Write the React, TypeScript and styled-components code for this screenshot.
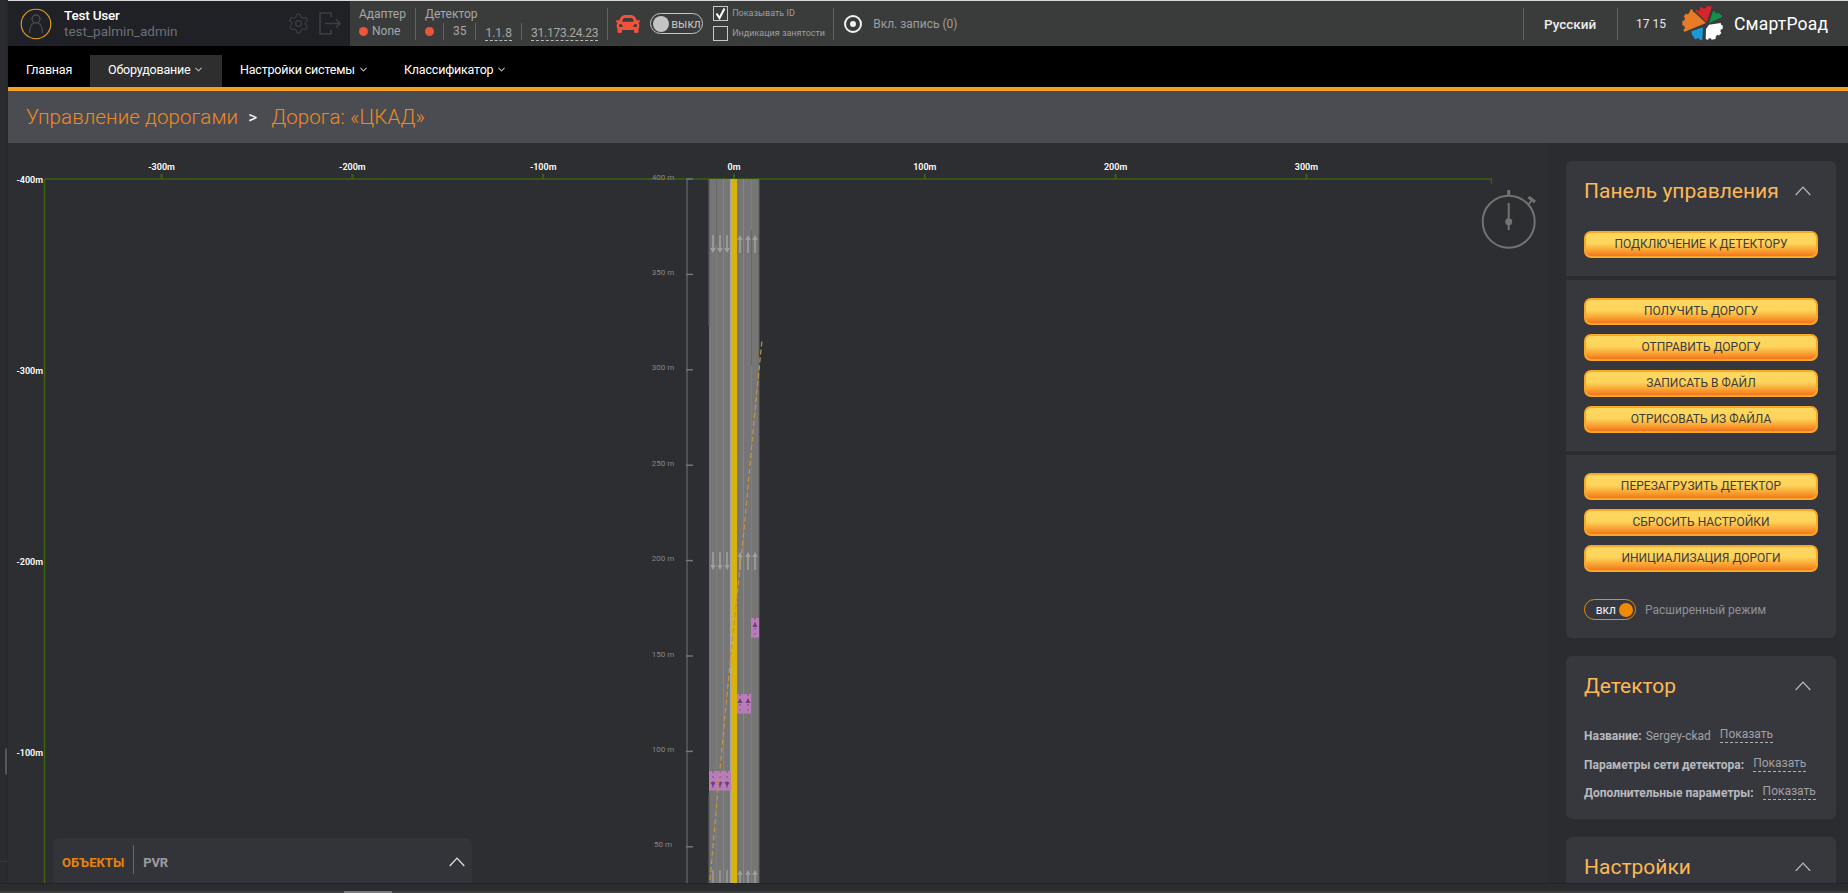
import React from "react";
import styled, { createGlobalStyle } from "styled-components";
import { FaCar } from "react-icons/fa";
import { ChevronDown, Settings } from "lucide-react";

const Global = createGlobalStyle`
  html, body { margin: 0; padding: 0; background: #2a2b2f; overflow: hidden; }
  * { box-sizing: border-box; }
  body { font-family: Roboto, "Liberation Sans", sans-serif; }
`;

const Page = styled.div`
  width: 1848px; height: 893px; display: flex; flex-direction: column; overflow: hidden; background: #2a2b2f;
`;
const Workspace = styled.div`
  height: 883px; display: flex; position: relative;
`;
const LeftRail = styled.div`
  width: 8px; flex: none; background: #2a2b2f; position: relative; border-right: 1px solid #27282c;
`;
const RailHandle = styled.div`
  position: absolute; left: 5px; top: 748px; width: 2px; height: 27px; background: #55575b; border-radius: 2px 0 0 2px;
`;
const RailLine = styled.div`
  position: absolute; left: 0; right: 0; top: 861px; height: 1px; background: #3a3b3f;
`;
const Main = styled.div`
  flex: 1; min-width: 0; display: flex; flex-direction: column;
`;
const TopBar = styled.header`
  height: 46px; flex: none; display: flex; border-top: 1px solid #d8d8d8;
`;
const UserBlock = styled.div`
  width: 342px; flex: none; background: #1f2126; display: flex; align-items: center; padding: 0 9px 0 12px;
`;
const UserText = styled.div`
  margin-left: 12px; flex: 1;
`;
const UserName = styled.div`
  font-size: 13.5px; line-height: 15px; font-weight: 500; color: #fff; letter-spacing: -0.2px;
`;
const UserLogin = styled.div`
  font-size: 13.5px; line-height: 16px; color: #6b7076;
`;
const DimIcons = styled.div`
  display: flex; align-items: center; gap: 9px; color: #3d3f43;
`;
const StatusBar = styled.div`
  flex: 1; background: #3a3c3b; display: flex; align-items: center; color: #a6a8a8; padding-left: 9px;
`;
const StatusCol = styled.div`
  display: flex; flex-direction: column; height: 33px; justify-content: space-between;
`;
const StatusLabel = styled.div`
  font-size: 12px; line-height: 15px; color: #a6a8a8; white-space: nowrap;
`;
const StatusValues = styled.div`
  display: flex; align-items: center; font-size: 12px; line-height: 17px; height: 17px; white-space: nowrap;
`;
const Dot = styled.span<{ $gap: number }>`
  width: 9px; height: 9px; border-radius: 50%; background: #eb553a; margin-right: ${(p) => p.$gap}px; flex: none;
`;
const VDivider = styled.div<{ $mx: number; $h?: number }>`
  width: 1px; height: ${(p) => p.$h ?? 32}px; background: #606262; margin: 0 ${(p) => p.$mx}px; flex: none;
`;
const Dashed = styled.span<{ $tight?: boolean }>`
  border-bottom: 1px dashed #b8b8b8; color: #a6a8a8; line-height: 14px; margin-top: 3px;
  letter-spacing: ${(p) => (p.$tight ? "-0.25px" : "0")};
`;
const CarWrap = styled.div`
  display: flex; margin: 0 10px 0 -1px; color: #f0533a;
`;
const OffToggle = styled.div`
  width: 53px; height: 21px; border: 1px solid #c4c4c4; border-radius: 11px; display: flex; align-items: center; padding-left: 2px; margin-right: 10px; flex: none;
`;
const OffKnob = styled.span`
  width: 16px; height: 16px; border-radius: 50%; background: #c4c4c4; flex: none;
`;
const OffText = styled.span`
  font-size: 12px; color: #c4c4c4; margin-left: 2px;
`;
const Checks = styled.div`
  display: flex; flex-direction: column; gap: 5px; width: 120px; flex: none;
`;
const CheckRow = styled.div`
  display: flex; align-items: center; gap: 4px; font-size: 9px; color: #9c9fa0; line-height: 15px; white-space: nowrap;
`;
const CheckBox = styled.span`
  width: 15px; height: 15px; border: 1px solid #c8c8c8; display: flex; align-items: center; justify-content: center; flex: none;
`;
const RecDot = styled.span`
  width: 18px; height: 18px; border: 2px solid #f2f2f2; border-radius: 50%; display: flex; align-items: center; justify-content: center; margin-right: 11px; margin-left: 10px; flex: none;
  &::after { content: ""; width: 6px; height: 6px; background: #f2f2f2; border-radius: 50%; }
`;
const RecLabel = styled.span`
  font-size: 12px; color: #9c9fa0; white-space: nowrap;
`;
const Spacer = styled.div`
  flex: 1;
`;
const RightGroup = styled.div`
  display: flex; align-items: center; flex: none;
`;
const Lang = styled.div`
  font-size: 13.5px; font-weight: 500; color: #eee; width: 52px; margin: 0 21px 0 20px; white-space: nowrap;
`;
const Clock = styled.div`
  font-size: 12px; color: #e6e6e6; white-space: nowrap; width: 28px; margin: 0 18px;
`;
const Brand = styled.div`
  font-size: 17.5px; color: #fff; width: 94px; margin-left: 11px; margin-right: 20px; white-space: nowrap; letter-spacing: 0.2px;
`;
const Nav = styled.nav`
  height: 45px; flex: none; background: #000; border-bottom: 4px solid #f5a01f; display: flex; align-items: flex-end;
`;
const NavItem = styled.div<{ $active?: boolean; $w: number }>`
  height: 32px; width: ${(p) => p.$w}px; flex: none; display: flex; align-items: center; padding: 0 0 3px 18px; gap: 3px;
  font-size: 12.5px; color: #fff; letter-spacing: -0.2px; white-space: nowrap;
  background: ${(p) => (p.$active ? "#2e2e2e" : "transparent")};
  svg { color: #b5b5b5; }
`;
const Crumbs = styled.div`
  height: 52px; flex: none; background: #4b4c52; display: flex; align-items: center; padding-left: 18px; padding-bottom: 1px;
  font-size: 20.5px; font-weight: 300; color: #ee8a1f; letter-spacing: 0.1px; white-space: nowrap;
`;
const CrumbSep = styled.span`
  color: #fff; font-size: 17px; font-weight: 400; margin: 0 14px 0 10px;
`;
const Body = styled.div`
  flex: 1; min-height: 0; display: flex;
`;
const Canvas = styled.div`
  flex: 1; min-width: 0; position: relative; background: #2d2e32; overflow: hidden;
`;
const ChartSvg = styled.svg`
  display: block; width: 1540px; height: 740px;
`;
const ObjectsPanel = styled.div`
  position: absolute; left: 45px; bottom: 0; width: 419px; height: 45px; background: #33343a; border-radius: 6px 6px 0 0;
  display: flex; align-items: center; padding: 3px 7px 0 9px;
`;
const TabActive = styled.span`
  font-size: 13px; font-weight: 700; color: #e8830c;
`;
const TabDivider = styled.span`
  width: 1px; height: 29px; background: #65666b; margin: -5px 9px 0 9px;
`;
const Tab = styled.span`
  font-size: 13px; font-weight: 700; color: #9b9da0; flex: 1; letter-spacing: -0.2px;
`;
const Side = styled.aside`
  width: 300px; flex: none; background: #2b2c30; padding: 18px 12px 0 18px; overflow: hidden; display: flex; flex-direction: column;
`;
const Section = styled.section<{ $top?: boolean; $bottom?: boolean; $gapAfter: number; $grow?: boolean }>`
  background: #37383e; flex: ${(p) => (p.$grow ? 1 : "none")}; margin-bottom: ${(p) => p.$gapAfter}px;
  border-radius: ${(p) => (p.$top ? "6px 6px" : "0 0")} ${(p) => (p.$bottom ? "6px 6px" : "0 0")};
`;
const SecHead = styled.div<{ $mb: number }>`
  display: flex; justify-content: space-between; align-items: center; height: 30px; margin: 15px 0 ${(p) => p.$mb}px; padding: 0 25px 0 18px;
`;
const SecTitle = styled.h2`
  margin: 0; font-size: 21px; font-weight: 400; color: #fdb855; white-space: nowrap;
`;
const ButtonStack = styled.div<{ $pt: number; $pb: number }>`
  display: flex; flex-direction: column; gap: 9px; padding: ${(p) => p.$pt}px 18px ${(p) => p.$pb}px;
`;
const GoldButton = styled.button`
  height: 27px; width: 234px; border: 2px solid #f9a825; border-radius: 7px; padding: 0 0 2px; font-family: inherit;
  background: linear-gradient(#fdd860 0%, #fdd45c 45%, #f9a433 75%, #f5741d 100%);
  font-size: 12px; color: #3d3a3a; text-transform: uppercase;
`;
const ModeRow = styled.div`
  display: flex; align-items: center; padding: 9px 18px 18px;
`;
const OnToggle = styled.div`
  width: 52px; height: 21px; border: 1px solid #e98a0e; border-radius: 11px; display: flex; align-items: center; justify-content: flex-end; padding-right: 2px; flex: none;
`;
const OnText = styled.span`
  font-size: 12px; color: #f2f2f2; margin-right: 3px;
`;
const OnKnob = styled.span`
  width: 14px; height: 14px; border-radius: 50%; background: #ee8a06;
`;
const ModeLabel = styled.span`
  font-size: 12px; color: #8e9298; margin-left: 9px; white-space: nowrap;
`;
const Detail = styled.div`
  padding: 21px 18px 11px;
`;
const DetailRow = styled.div`
  display: flex; align-items: center; height: 28.5px; font-size: 12px; color: #a0a2a6; white-space: nowrap;
`;
const DetailKey = styled.strong`
  font-weight: 700; color: #b8babe; margin-right: 4px;
`;
const DetailLink = styled.span<{ $ml: number }>`
  margin-left: ${(p) => p.$ml}px; border-bottom: 1px dashed #aeb0b4; line-height: 16px; margin-top: -3px; color: #a0a2a6;
`;
const BottomStrip = styled.div`
  height: 10px; flex: none; background: #2b2c30; border-top: 1px solid #232428; position: relative;
`;
const Scroll = styled.div`
  position: absolute; left: 0; right: 0; bottom: 0; height: 2px; background: #3e4040;
`;
const ScrollThumb = styled.div`
  position: absolute; left: 344px; bottom: 0; width: 48px; height: 2px; background: #77797b;
`;

const ChevronUp = ({ color = "#b9babc", w = 16 }: { color?: string; w?: number }) => (
  <svg width={w} height={w * 0.6} viewBox="0 0 16 9.6" fill="none">
    <polyline points="0.7,9 8,1.2 15.3,9" stroke={color} strokeWidth="1.2" />
  </svg>
);

const Avatar = () => (
  <svg width="32" height="32" viewBox="0 0 32 32" fill="none" style={{ flex: "none" }}>
    <circle cx="16" cy="16" r="14.8" stroke="#e8a01e" strokeWidth="1.1" />
    <circle cx="16" cy="11" r="4" stroke="#4a4c50" strokeWidth="1.3" />
    <path d="M9.5 25 C9.5 19 11.5 16 13.8 15 M22.5 25 C22.5 19 20.5 16 18.2 15" stroke="#4a4c50" strokeWidth="1.3" />
  </svg>
);

const Logout = () => (
  <svg width="22" height="23" viewBox="0 0 22 23" fill="none" stroke="currentColor" strokeWidth="1.6">
    <path d="M12 5 V1 H1 V22 H12 V18" />
    <path d="M6 11.5 H21 M17 7.5 L21 11.5 L17 15.5" />
  </svg>
);

const Logo = () => (
  <svg width="41" height="35" viewBox="0 0 41 35" style={{ flex: "none" }}>
    <path fill="#e87b27" d="M9 3 L11 4.2 L10.6 5.6 L12.8 6.8 L24 17 L2.2 26 L1.4 23.4 L3 22.4 L2.2 19.8 L.4 19.4 L.3 15 L2.4 14.6 L3 12 L1.6 10.4 L4 7.6 L5.8 8.4 L7.4 6.6 Z" />
    <path fill="#d7232b" d="M13 4.7 L15.4 3.6 L16 5 L18 4.3 L18 1.6 L20.4 1 L21 2.4 L24 2.2 L24.2 .2 L29.7 .3 L29.4 2.2 L24.8 16.3 Z" />
    <path fill="#13924a" d="M31 5.2 L33 5.6 L33.2 7 L35.4 7.6 L36.6 6.8 L38.6 9 L40.3 9.7 L39.2 11.4 L27 17 Z" />
    <path fill="#ffffff" d="M38.7 17 L39.2 19 L40.8 19.4 L40.6 23 L38.8 23.6 L38.4 25.6 L39.4 27 L37 29.4 L35.4 28.8 L33.8 30.4 L33.6 33 L29.6 33.8 L28.8 32.2 L26.6 32.4 L26 34 L23.7 33 L24 23 L27 18.7 Z" />
    <path fill="#1b9ad6" d="M21 21.3 L20.3 33.7 L18 34.3 L17.4 32.6 L15.2 32.2 L13.8 33.4 L11.6 31.8 L12 30.4 L10.3 29.7 L9.3 25.3 Z" />
  </svg>
);

const px = (m: number) => 734 + m * 1.908;
const yOf = (m: number) => 179 + (400 - m) * 1.908;
const LANES = [713, 720, 727, 740, 748, 755];
const AXIS = "#3a6210";

const LaneArrow = ({ x, y, up, h = 18 }: { x: number; y: number; up: boolean; h?: number }) => (
  <g fill="#a0a0a0">
    {up ? (
      <>
        <rect x={x - 0.8} y={y + 4} width="1.6" height={h - 4} />
        <polygon points={`${x - 2.7},${y + 5} ${x},${y} ${x + 2.7},${y + 5}`} />
      </>
    ) : (
      <>
        <rect x={x - 0.8} y={y} width="1.6" height={h - 4} />
        <polygon points={`${x - 2.7},${y + h - 5} ${x},${y + h} ${x + 2.7},${y + h - 5}`} />
      </>
    )}
  </g>
);

const Purple = ({ x, w, y, lanes, up }: { x: number; w: number; y: number; lanes: number[]; up: boolean }) => (
  <g>
    <rect x={x} y={y} width={w} height="19.5" fill="#b87cb9" />
    {lanes.map((l) => (
      <g key={l}>
        <line x1={l} x2={l} y1={y} y2={y + 19.5} stroke="#7e4f85" strokeWidth="1" strokeDasharray="2 3" />
        <polygon points={up ? `${l - 2.5},${y + 9} ${l},${y + 4} ${l + 2.5},${y + 9}` : `${l - 2.5},${y + 11} ${l},${y + 16} ${l + 2.5},${y + 11}`} fill="#6e3f78" />
      </g>
    ))}
  </g>
);

const Chart = () => (
  <ChartSvg viewBox="8 143 1540 740">
    <line x1="45" y1="179" x2="1492" y2="179" stroke={AXIS} strokeWidth="1.5" />
    <line x1="44.5" y1="179" x2="44.5" y2="883" stroke={AXIS} strokeWidth="1.5" />
    <line x1="1491.5" y1="179" x2="1491.5" y2="184" stroke={AXIS} strokeWidth="1.2" />
    {[-300, -200, -100, 0, 100, 200, 300].map((m) => (
      <g key={m}>
        <line x1={px(m)} x2={px(m)} y1="174" y2="179" stroke={AXIS} strokeWidth="2" />
        <text x={px(m)} y="170" textAnchor="middle" fontFamily="Roboto" fontSize="9" fontWeight="600" fill="#ffffff">{m}m</text>
      </g>
    ))}
    {[-400, -300, -200, -100].map((m) => (
      <text key={m} x="43" y={179 + (m + 400) * 1.91 + 3.5} textAnchor="end" fontFamily="Roboto" fontSize="9" fontWeight="600" fill="#ffffff">{m}m</text>
    ))}

    <line x1="687" x2="687" y1="179" y2="883" stroke="#5f6063" strokeWidth="1.4" />
    {[400, 350, 300, 250, 200, 150, 100, 50].map((m) => (
      <g key={m}>
        <line x1="686" x2="693" y1={yOf(m)} y2={yOf(m)} stroke="#77787a" strokeWidth="1.4" />
        <text x="663" y={yOf(m) + 0.5} textAnchor="middle" fontFamily="Roboto" fontSize="8" fill="#85868a">{m} m</text>
      </g>
    ))}

    <rect x="709" y="179" width="50" height="704" fill="#767676" />
    <line x1="709" x2="709" y1="179" y2="326" stroke="#5c5c5c" strokeWidth="1.2" />
    <line x1="709" x2="709" y1="795" y2="883" stroke="#5c5c5c" strokeWidth="1.2" />
    <line x1="759" x2="759" y1="179" y2="883" stroke="#616161" strokeWidth="1" />
    <line x1="716.5" x2="716.5" y1="179" y2="883" stroke="#7e7e7e" strokeWidth="1" />
    <line x1="723.5" x2="723.5" y1="179" y2="883" stroke="#868686" strokeWidth="1" />
    <line x1="716.5" x2="716.5" y1="179" y2="245" stroke="#686868" strokeWidth="1" />
    <line x1="743.5" x2="743.5" y1="179" y2="883" stroke="#868686" strokeWidth="1" />
    <line x1="751.5" x2="751.5" y1="179" y2="883" stroke="#7e7e7e" strokeWidth="1" />
    <line x1="751.5" x2="751.5" y1="230" y2="365" stroke="#686868" strokeWidth="1" />
    <rect x="730" y="179" width="1" height="704" fill="#a8a8a8" />
    <rect x="731" y="179" width="6" height="704" fill="#d8b30c" />

    {LANES.map((x, i) => (
      <React.Fragment key={x}>
        <LaneArrow x={x} y={235} up={i > 2} />
        <LaneArrow x={x} y={552} up={i > 2} />
        {i > 2 ? (
          <polygon points={`${x - 2.7},875 ${x},870 ${x + 2.7},875`} fill="#a0a0a0" />
        ) : null}
        <rect x={x - 0.8} y={i > 2 ? 874 : 870} width="1.6" height={i > 2 ? 9 : 13} fill="#9a9a9a" />
      </React.Fragment>
    ))}

    <Purple x={709} w={22} y={771} lanes={[713, 720, 727]} up={false} />
    <Purple x={737} w={14} y={694} lanes={[740, 748]} up />
    <Purple x={751} w={8} y={618} lanes={[755]} up />

    <polyline points="710,880 718,790 730,663 744,530 755,410 762,340" fill="none" stroke="#c9933a" strokeWidth="1.2" strokeDasharray="5 3" />

    <g stroke="#737373" fill="none">
      <circle cx="1508.7" cy="221.7" r="26" strokeWidth="2" />
      <line x1="1508.7" x2="1508.7" y1="190" y2="196" strokeWidth="3" />
      <line x1="1508.7" x2="1508.7" y1="203" y2="230" strokeWidth="2" />
      <line x1="1528" x2="1532" y1="205" y2="200" strokeWidth="2" />
      <line x1="1528.5" x2="1535" y1="197" y2="202" strokeWidth="3" />
    </g>
    <circle cx="1508.7" cy="221.7" r="3.5" fill="#737373" />
  </ChartSvg>
);

export default function App() {
  return (
    <Page>
      <Global />
      <Workspace>
        <LeftRail><RailHandle /><RailLine /></LeftRail>
        <Main>
          <TopBar>
            <UserBlock>
              <Avatar />
              <UserText>
                <UserName>Test User</UserName>
                <UserLogin>test_palmin_admin</UserLogin>
              </UserText>
              <DimIcons>
                <Settings size={23} strokeWidth={1.2} />
                <Logout />
              </DimIcons>
            </UserBlock>
            <StatusBar>
              <StatusCol>
                <StatusLabel>Адаптер</StatusLabel>
                <StatusValues><Dot $gap={4} />None</StatusValues>
              </StatusCol>
              <VDivider $mx={9} />
              <StatusCol>
                <StatusLabel>Детектор</StatusLabel>
                <StatusValues>
                  <Dot $gap={0} />
                  <VDivider $mx={9} $h={17} />
                  35
                  <VDivider $mx={9} $h={17} />
                  <Dashed>1.1.8</Dashed>
                  <VDivider $mx={9} $h={17} />
                  <Dashed $tight>31.173.24.23</Dashed>
                </StatusValues>
              </StatusCol>
              <VDivider $mx={9} />
              <CarWrap><FaCar size={24} /></CarWrap>
              <OffToggle><OffKnob /><OffText>выкл</OffText></OffToggle>
              <Checks>
                <CheckRow>
                  <CheckBox>
                    <svg width="13" height="13" viewBox="0 0 13 13" fill="none"><path d="M2.5 6.5 L5.5 11 L10.5 1.5" stroke="#fff" strokeWidth="2" /></svg>
                  </CheckBox>
                  Показывать ID
                </CheckRow>
                <CheckRow><CheckBox />Индикация занятости</CheckRow>
              </Checks>
              <VDivider $mx={0} />
              <RecDot />
              <RecLabel>Вкл. запись (0)</RecLabel>
              <Spacer />
              <RightGroup>
                <VDivider $mx={0} />
                <Lang>Русский</Lang>
                <VDivider $mx={0} />
                <Clock>17 15</Clock>
                <Logo />
                <Brand>СмартРоад</Brand>
              </RightGroup>
            </StatusBar>
          </TopBar>
          <Nav>
            <NavItem $w={82}>Главная</NavItem>
            <NavItem $w={132} $active>Оборудование <ChevronDown size={11} strokeWidth={2.5} /></NavItem>
            <NavItem $w={164}>Настройки системы <ChevronDown size={11} strokeWidth={2.5} /></NavItem>
            <NavItem $w={140}>Классификатор <ChevronDown size={11} strokeWidth={2.5} /></NavItem>
          </Nav>
          <Crumbs>Управление дорогами<CrumbSep>&gt;</CrumbSep>Дорога: «ЦКАД»</Crumbs>
          <Body>
            <Canvas>
              <Chart />
              <ObjectsPanel>
                <TabActive>ОБЪЕКТЫ</TabActive>
                <TabDivider />
                <Tab>PVR</Tab>
                <ChevronUp color="#e6e6e6" />
              </ObjectsPanel>
            </Canvas>
            <Side>
              <Section $top $gapAfter={4}>
                <SecHead $mb={25}>
                  <SecTitle>Панель управления</SecTitle>
                  <ChevronUp />
                </SecHead>
                <ButtonStack $pt={0} $pb={18}>
                  <GoldButton>Подключение к детектору</GoldButton>
                </ButtonStack>
              </Section>
              <Section $gapAfter={4}>
                <ButtonStack $pt={18} $pb={18}>
                  <GoldButton>Получить дорогу</GoldButton>
                  <GoldButton>Отправить дорогу</GoldButton>
                  <GoldButton>Записать в файл</GoldButton>
                  <GoldButton>Отрисовать из файла</GoldButton>
                </ButtonStack>
              </Section>
              <Section $bottom $gapAfter={18}>
                <ButtonStack $pt={18} $pb={18}>
                  <GoldButton>Перезагрузить детектор</GoldButton>
                  <GoldButton>Сбросить настройки</GoldButton>
                  <GoldButton>Инициализация дороги</GoldButton>
                </ButtonStack>
                <ModeRow>
                  <OnToggle><OnText>вкл</OnText><OnKnob /></OnToggle>
                  <ModeLabel>Расширенный режим</ModeLabel>
                </ModeRow>
              </Section>
              <Section $top $bottom $gapAfter={18}>
                <SecHead $mb={0}>
                  <SecTitle>Детектор</SecTitle>
                  <ChevronUp />
                </SecHead>
                <Detail>
                  <DetailRow><DetailKey>Название:</DetailKey>Sergey-ckad<DetailLink $ml={9}>Показать</DetailLink></DetailRow>
                  <DetailRow><DetailKey>Параметры сети детектора:</DetailKey><DetailLink $ml={5}>Показать</DetailLink></DetailRow>
                  <DetailRow><DetailKey>Дополнительные параметры:</DetailKey><DetailLink $ml={5}>Показать</DetailLink></DetailRow>
                </Detail>
              </Section>
              <Section $top $gapAfter={0} $grow>
                <SecHead $mb={0}>
                  <SecTitle>Настройки</SecTitle>
                  <ChevronUp />
                </SecHead>
              </Section>
            </Side>
          </Body>
        </Main>
      </Workspace>
      <BottomStrip>
        <Scroll />
        <ScrollThumb />
      </BottomStrip>
    </Page>
  );
}
